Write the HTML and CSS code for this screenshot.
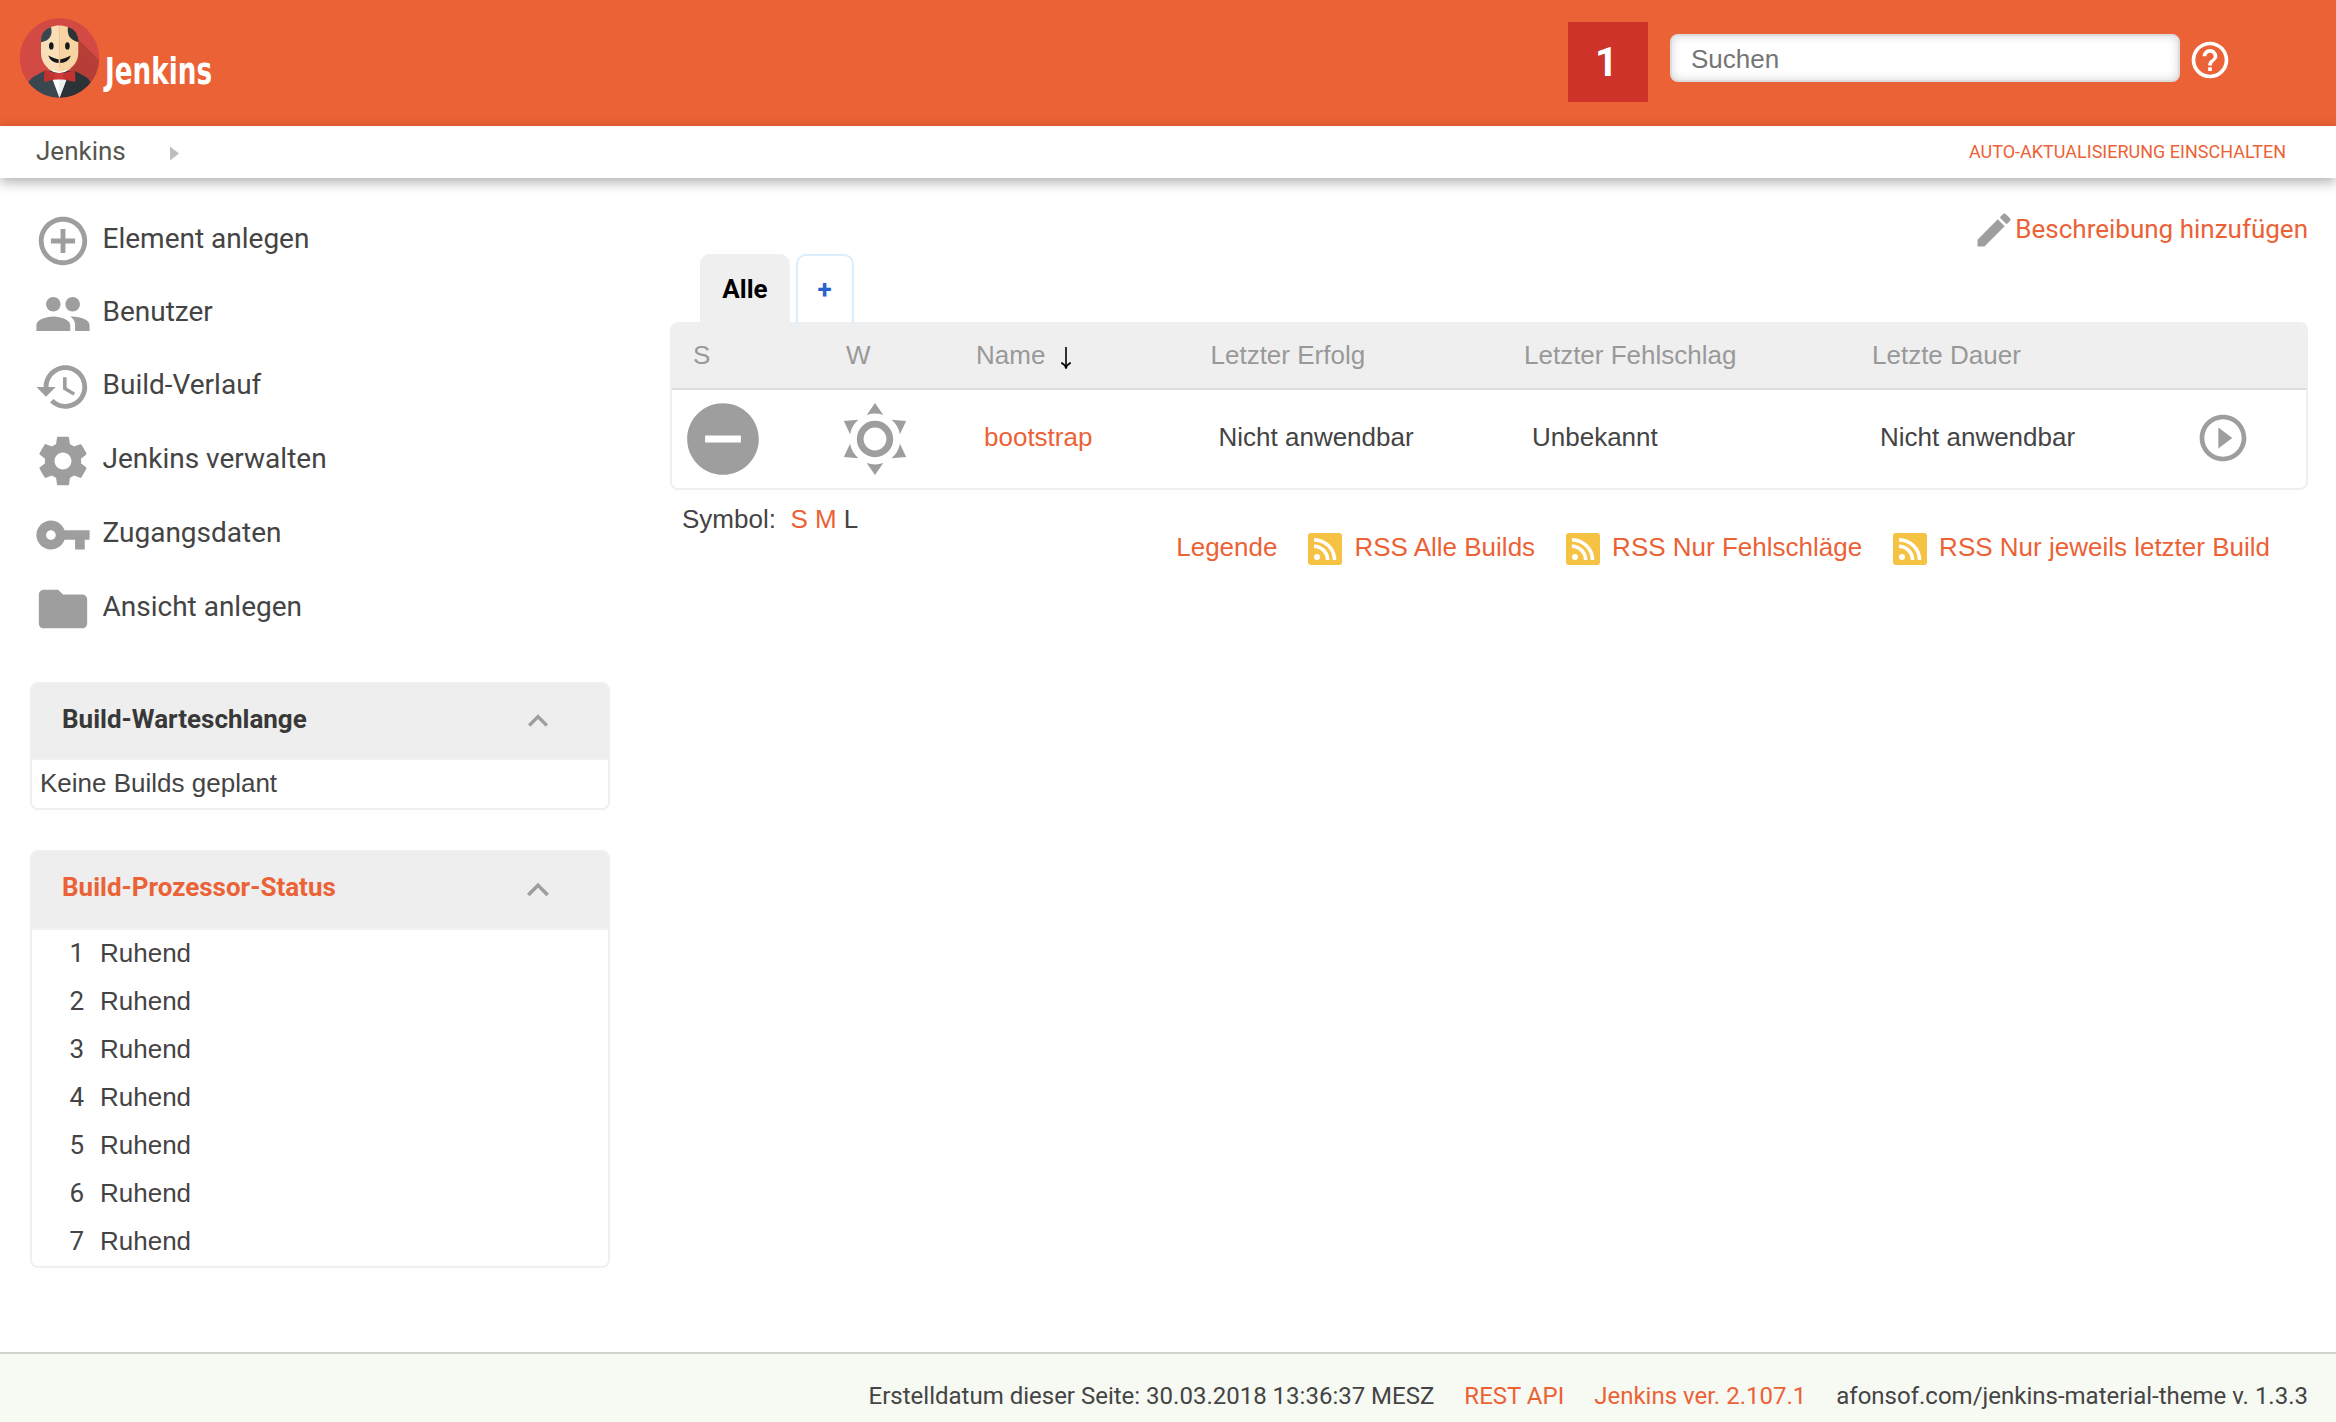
FILE: index.html
```html
<!DOCTYPE html>
<html lang="de">
<head>
<meta charset="utf-8">
<title>Dashboard [Jenkins]</title>
<link rel="stylesheet" href="styles.css">
</head>
<body>
<svg class="defs" aria-hidden="true">
  <symbol id="rss" viewBox="0 0 34 32">
    <rect width="34" height="32" rx="3" fill="#f6c244"/>
    <circle cx="9" cy="24" r="3" fill="#fff"/>
    <path d="M6 13.2A14 13.8 0 0 1 19.6 27M6 6.700A21 20.300 0 0 1 26.500 27" fill="none" stroke="#fff" stroke-width="3.600"/>
  </symbol>
  <symbol id="up" viewBox="0 0 24 24"><path d="M12 8l-6 6 1.410 1.410L12 10.830l4.590 4.580L18 14z"/></symbol>
</svg>

<header class="top">
  <svg class="logo" viewBox="0 0 280 90" width="280" height="90">
    <defs><clipPath id="disc"><circle cx="39.500" cy="40" r="39.700"/></clipPath></defs>
    <g clip-path="url(#disc)">
      <rect width="80" height="80" fill="#d24a43"/>
      <path d="M56 19L90 53V80H50V40z" fill="#b53e37"/>
      <path d="M39.300 53H24L13 59Q9 62 5 70L18 82H39.300z" fill="#3b474f"/>
      <path d="M39.300 53H55L66 59Q70 62 74 70L60 82H39.300z" fill="#2b3338"/>
      <path d="M32 60h15l-7.500 20z" fill="#fff"/>
      <path d="M39.300 60H47l-7.700 20z" fill="#eceff0"/>
      <path d="M24.500 52Q24 58 24 64l11-2.500 4.300-1 4.200 1L55.300 64Q55.500 58 55 52L43.500 55h-8z" fill="#c0322f"/>
      <path d="M35.300 54.500h8v7h-8z" fill="#d0393a"/>
      <path d="M27.500 50l6 4 5.800 1 5.800-1 6-4z" fill="#fff"/>
      <path d="M39.300 7.600C26 7.600 21 17 21 26v9c0 11 8 18.700 18.300 18.700z" fill="#f9dfb8"/>
      <path d="M39.200 7.600C52.500 7.600 58.300 17 58.300 26v9c0 11-9 18.700-19.100 18.700z" fill="#f7d4a1"/>
      <path d="M31 9Q34 22 20.900 24.300Q20.500 12 31 9z" fill="#3b474f"/>
      <path d="M48 9Q46 21 58.400 24.300Q58.600 12 48 9z" fill="#2b3338"/>
      <ellipse cx="31.300" cy="27.900" rx="2.300" ry="3.700" fill="#15181a"/>
      <ellipse cx="47.400" cy="27.900" rx="2.300" ry="3.700" fill="#15181a"/>
      <path d="M28.200 37.500Q34 40.500 38.700 41.500V45Q31 45 28.200 37.500zM51 37.500Q45 40.500 40.200 41.500V45Q48 45 51 37.500z" fill="#15181a"/>
    </g>
    <text class="brand" x="85" y="66" textLength="107" lengthAdjust="spacingAndGlyphs">Jenkins</text>
  </svg>
  <div class="tools">
    <span class="alert">1</span>
    <input class="search" type="text" placeholder="Suchen">
    <svg class="help" viewBox="0 0 24 24"><path d="M11 18h2v-2h-2v2zm1-16C6.480 2 2 6.480 2 12s4.480 10 10 10 10-4.480 10-10S17.520 2 12 2zm0 18c-4.410 0-8-3.590-8-8s3.590-8 8-8 8 3.590 8 8-3.590 8-8 8zm0-14c-2.210 0-4 1.790-4 4h2c0-1.100.9-2 2-2s2 .9 2 2c0 2-3 1.750-3 5h2c0-2.250 3-2.500 3-5 0-2.210-1.790-4-4-4z"/></svg>
  </div>
</header>

<nav class="crumbs">
  <span>Jenkins</span>
  <svg class="sep" viewBox="0 0 9 14"><path d="M0 0l9 7-9 7z"/></svg>
  <a class="refresh">AUTO-AKTUALISIERUNG EINSCHALTEN</a>
</nav>

<div class="page">
  <aside class="side">
    <ul class="tasks">
      <li><svg viewBox="0 0 24 24"><path d="M13 7h-2v4H7v2h4v4h2v-4h4v-2h-4V7zm-1-5C6.480 2 2 6.480 2 12s4.480 10 10 10 10-4.480 10-10S17.520 2 12 2zm0 18c-4.410 0-8-3.590-8-8s3.590-8 8-8 8 3.590 8 8-3.590 8-8 8z"/></svg><span>Element anlegen</span></li>
      <li><svg viewBox="0 0 24 24"><path d="M16 11c1.660 0 2.990-1.340 2.990-3S17.660 5 16 5s-3 1.340-3 3 1.340 3 3 3zm-8 0c1.660 0 2.990-1.340 2.990-3S9.660 5 8 5 5 6.340 5 8s1.340 3 3 3zm0 2c-2.330 0-7 1.170-7 3.500V19h14v-2.500c0-2.330-4.670-3.500-7-3.500zm8 0c-.29 0-.62.020-.97.050 1.160.84 1.970 1.970 1.970 3.450V19h6v-2.500c0-2.330-4.670-3.500-7-3.500z"/></svg><span>Benutzer</span></li>
      <li><svg viewBox="0 0 24 24"><path d="M13 3c-4.970 0-9 4.030-9 9H1l3.890 3.890.070.140L9 12H6c0-3.870 3.130-7 7-7s7 3.130 7 7-3.130 7-7 7c-1.930 0-3.680-.79-4.940-2.060l-1.420 1.420C8.270 19.990 10.510 21 13 21c4.970 0 9-4.030 9-9s-4.030-9-9-9zm-1 5v5l4.280 2.540.72-1.210-3.500-2.080V8H12z"/></svg><span>Build-Verlauf</span></li>
      <li><svg viewBox="0 0 24 24"><path d="M19.430 12.980c.04-.32.07-.64.07-.98s-.03-.66-.07-.98l2.110-1.650c.19-.15.24-.42.12-.64l-2-3.460c-.12-.22-.39-.3-.61-.22l-2.490 1c-.52-.4-1.080-.73-1.690-.98l-.38-2.650C14.460 2.180 14.250 2 14 2h-4c-.25 0-.46.18-.49.42l-.38 2.650c-.61.25-1.170.59-1.690.98l-2.490-1c-.23-.09-.49 0-.61.22l-2 3.460c-.13.22-.07.49.12.64l2.110 1.650c-.04.32-.07.65-.07.98s.03.66.07.98l-2.110 1.650c-.19.15-.24.42-.12.64l2 3.460c.12.22.39.3.61.22l2.490-1c.52.4 1.080.73 1.690.98l.38 2.650c.03.24.24.42.49.42h4c.25 0 .46-.18.49-.42l.38-2.650c.61-.25 1.170-.59 1.690-.98l2.490 1c.23.09.49 0 .61-.22l2-3.460c.12-.22.07-.49-.12-.64l-2.110-1.650zM12 15.500c-1.930 0-3.500-1.570-3.500-3.500s1.570-3.500 3.500-3.500 3.500 1.570 3.500 3.500-1.570 3.500-3.500 3.500z"/></svg><span>Jenkins verwalten</span></li>
      <li><svg viewBox="0 0 24 24"><path d="M12.650 10C11.830 7.670 9.610 6 7 6c-3.310 0-6 2.690-6 6s2.690 6 6 6c2.610 0 4.830-1.670 5.650-4H17v4h4v-4h2v-4H12.650zM7 14c-1.100 0-2-.9-2-2s.9-2 2-2 2 .9 2 2-.9 2-2 2z"/></svg><span>Zugangsdaten</span></li>
      <li><svg viewBox="0 0 24 24"><path d="M10 4H4c-1.100 0-1.990.9-1.990 2L2 18c0 1.100.9 2 2 2h16c1.100 0 2-.9 2-2V8c0-1.100-.9-2-2-2h-8l-2-2z"/></svg><span>Ansicht anlegen</span></li>
    </ul>

    <section class="pane queue">
      <h2><span>Build-Warteschlange</span><svg><use href="#up"/></svg></h2>
      <p>Keine Builds geplant</p>
    </section>

    <section class="pane executors">
      <h2><span>Build-Prozessor-Status</span><svg><use href="#up"/></svg></h2>
      <ol>
        <li><b>1</b>Ruhend</li>
        <li><b>2</b>Ruhend</li>
        <li><b>3</b>Ruhend</li>
        <li><b>4</b>Ruhend</li>
        <li><b>5</b>Ruhend</li>
        <li><b>6</b>Ruhend</li>
        <li><b>7</b>Ruhend</li>
      </ol>
    </section>
  </aside>

  <main class="main">
    <a class="describe"><svg viewBox="0 0 24 24"><path d="M3 17.250V21h3.750L17.810 9.940l-3.750-3.750L3 17.250zM20.710 7.040c.39-.39.39-1.020 0-1.410l-2.340-2.340c-.39-.39-1.020-.39-1.410 0l-1.830 1.830 3.750 3.750 1.830-1.830z"/></svg><span>Beschreibung hinzufügen</span></a>
    <div class="tabs"><span class="tab active">Alle</span><span class="tab add">+</span></div>
    <div class="jobs">
      <div class="row head">
        <span class="c1">S</span><span class="c2">W</span>
        <span class="sorted">Name<svg viewBox="0 0 12 24"><path d="M6 1V21M1.200 16.800Q5 18.500 6 22.500Q7 18.500 10.800 16.800"/></svg></span>
        <span>Letzter Erfolg</span><span>Letzter Fehlschlag</span><span>Letzte Dauer</span><span></span>
      </div>
      <div class="row job">
        <span class="icon"><svg viewBox="0 0 24 24"><path d="M12 2C6.480 2 2 6.480 2 12s4.480 10 10 10 10-4.480 10-10S17.520 2 12 2zm5 11H7v-2h10v2z"/></svg></span>
        <span class="icon"><svg viewBox="-43 -43 86 86">
          <circle r="14.800" fill="none" stroke="#9e9e9e" stroke-width="6.800"/>
          <path id="ray" d="M0-36L8.300-24A25.400 25.400 0 0 0-8.300-24z"/>
          <use href="#ray" transform="rotate(60)"/><use href="#ray" transform="rotate(120)"/><use href="#ray" transform="rotate(180)"/><use href="#ray" transform="rotate(240)"/><use href="#ray" transform="rotate(300)"/>
        </svg></span>
        <a>bootstrap</a><span>Nicht anwendbar</span><span>Unbekannt</span><span>Nicht anwendbar</span>
        <span class="run"><svg viewBox="0 0 24 24"><path d="M10 16.500l6-4.500-6-4.500v9zM12 2C6.480 2 2 6.480 2 12s4.480 10 10 10 10-4.480 10-10S17.520 2 12 2zm0 18c-4.410 0-8-3.590-8-8s3.590-8 8-8 8 3.590 8 8-3.590 8-8 8z"/></svg></span>
      </div>
    </div>
    <div class="sizes">Symbol: &nbsp;<a>S</a> <a>M</a> L</div>
    <div class="feeds">
      <a>Legende</a>
      <a><svg><use href="#rss"/></svg>RSS Alle Builds</a>
      <a><svg><use href="#rss"/></svg>RSS Nur Fehlschläge</a>
      <a><svg><use href="#rss"/></svg>RSS Nur jeweils letzter Build</a>
    </div>
  </main>
</div>

<footer class="foot">
  <span>Erstelldatum dieser Seite: 30.03.2018 13:36:37 MESZ</span>
  <a>REST API</a>
  <a>Jenkins ver. 2.107.1</a>
  <span>afonsof.com/jenkins-material-theme v. 1.3.3</span>
</footer>
</body>
</html>
```
FILE: styles.css
```css
* { box-sizing: border-box; }
body {
  margin: 0;
  height: 1422px;
  display: flex;
  flex-direction: column;
  overflow: hidden;
  background: #fff;
  color: #444;
  font: 26px/30px "Liberation Sans", Arial, sans-serif;
}
svg { display: block; flex: none; fill: #9e9e9e; }
a { color: #eb6236; }
.defs { position: absolute; width: 0; height: 0; }

.top {
  height: 126px;
  flex: none;
  display: flex;
  justify-content: space-between;
  align-items: flex-start;
  padding: 18px 104px 0 20px;
  background: #eb6236;
}
.brand { fill: #fff; font: bold 38px "DejaVu Sans", sans-serif; }
.tools { display: flex; align-items: flex-start; padding-top: 4px; }
.alert {
  width: 80px;
  height: 80px;
  margin-right: 22px;
  padding-right: 3px;
  background: #cd3329;
  color: #fff;
  font: bold 40px/82px Roboto, sans-serif;
  text-align: center;
}
.search {
  width: 510px;
  height: 48px;
  margin: 12px 8px 0 0;
  padding: 2px 19px 0;
  border: 2px solid #dcdcde;
  border-radius: 8px;
  background: #fff;
  box-shadow: inset 0 0 10px rgba(0, 0, 0, .16);
  font: 26px "Liberation Sans", Arial, sans-serif;
}
.search::placeholder { color: #757575; }
.help { width: 44px; height: 44px; margin-top: 16px; fill: #fff; }

.crumbs {
  position: relative;
  height: 52px;
  flex: none;
  display: flex;
  align-items: center;
  padding: 0 50px 0 36px;
  background: #fff;
  box-shadow: 0 4px 12px rgba(0, 0, 0, .32);
  color: #54564f;
  font: 26px/50px Roboto, sans-serif;
}
.crumbs span { padding-bottom: 2px; }
.sep { width: 9px; height: 15px; margin: 2px 0 0 44px; fill: #bdbdbd; }
.refresh { margin-left: auto; font-size: 18px; }

.page { flex: 1; display: flex; }
.side { width: 610px; padding: 26px 0 0 30px; }
.tasks { margin: 0 0 36px; padding: 0 0 0 4px; list-style: none; }
.tasks li { display: flex; align-items: center; height: 74px; font: 28px/34px Roboto, sans-serif; }
.tasks li:nth-child(2) { height: 72px; }
.tasks svg { width: 58px; height: 58px; margin-right: 10.500px; }
.tasks span { padding-bottom: 4px; }

.pane { margin-bottom: 40px; border: 2px solid #efefef; border-radius: 8px; overflow: hidden; }
.pane h2 {
  display: flex;
  justify-content: space-between;
  align-items: center;
  margin: 0;
  padding: 0 50px 0 30px;
  background: #eee;
  border-bottom: 2px solid #f1f1f1;
  font: bold 26px/30px Roboto, sans-serif;
}
.pane p { margin: 0; padding: 0 8px 2px; line-height: 46px; }
.queue h2 { height: 76px; color: #383838; }
.queue h2 span { padding-bottom: 4px; }
.queue svg { width: 40px; height: 40px; }
.executors h2 { height: 78px; padding-right: 48px; color: #eb6236; }
.executors h2 span { padding-bottom: 6px; }
.executors svg { width: 44px; height: 44px; }
.executors ol { margin: 0; padding: 0; list-style: none; }
.executors li { display: flex; height: 48px; line-height: 46px; }
.executors b { width: 52px; margin-right: 16px; text-align: right; font: 26px/46px Roboto, sans-serif; }

.main { width: 1638px; margin-left: 60px; padding-top: 30px; }
.describe { display: flex; justify-content: flex-end; align-items: center; height: 44px; font: 26px/30px Roboto, sans-serif; }
.describe svg { width: 44px; height: 44px; margin-right: -1px; }
.describe span { padding-bottom: 2px; }
.tabs { display: flex; height: 70px; margin: 2px 0 -2px; padding-left: 30px; }
.tab {
  border: 2px solid #efefef;
  border-bottom: 0;
  border-radius: 10px 10px 0 0;
  font: bold 26px/66px Roboto, sans-serif;
  text-align: center;
}
.active { width: 90px; margin-right: 6px; background: #efefef; color: #000; }
.add { width: 58px; padding-right: 1px; border-color: #d9eeff; color: #2a62cc; z-index: 1; position: relative; }

.jobs { border: 2px solid #efefef; border-radius: 8px; overflow: hidden; }
.row { display: grid; grid-template-columns: 152px 144px 234.500px 313.500px 348px 316px 1fr; align-items: center; }
.head { height: 66px; padding-bottom: 2px; background: #efefef; border-bottom: 2px solid #dcdcdc; color: #999; }
.head > span { padding-left: 8px; }
.head > .c1 { padding-left: 21px; }
.head > .c2 { padding-left: 22px; }
.sorted { display: flex; align-items: center; }
.sorted svg { width: 12px; height: 24px; margin: 6px 0 0 15px; fill: none; stroke: #000; stroke-width: 1.600; }
.job { height: 98px; }
.job > * { padding: 0 0 4px 16px; }
.job > .icon { padding: 0 0 0 8px; }
.job > .run { padding: 0 0 2px 15px; }
.icon svg { width: 86px; height: 86px; }
.run svg { width: 56px; height: 56px; }

.sizes { padding: 15px 12px 0; line-height: 28px; }
.feeds { display: flex; justify-content: flex-end; gap: 31px; padding-right: 38px; }
.feeds a { display: flex; line-height: 28px; }
.feeds svg { width: 34px; height: 32px; margin-right: 12px; }

.foot {
  height: 70px;
  flex: none;
  display: flex;
  justify-content: flex-end;
  gap: 30px;
  padding: 27px 28px 0;
  border-top: 2px solid #d3d5cc;
  background: #f7f9f3;
  font: 24px/30px Roboto, sans-serif;
}
```
